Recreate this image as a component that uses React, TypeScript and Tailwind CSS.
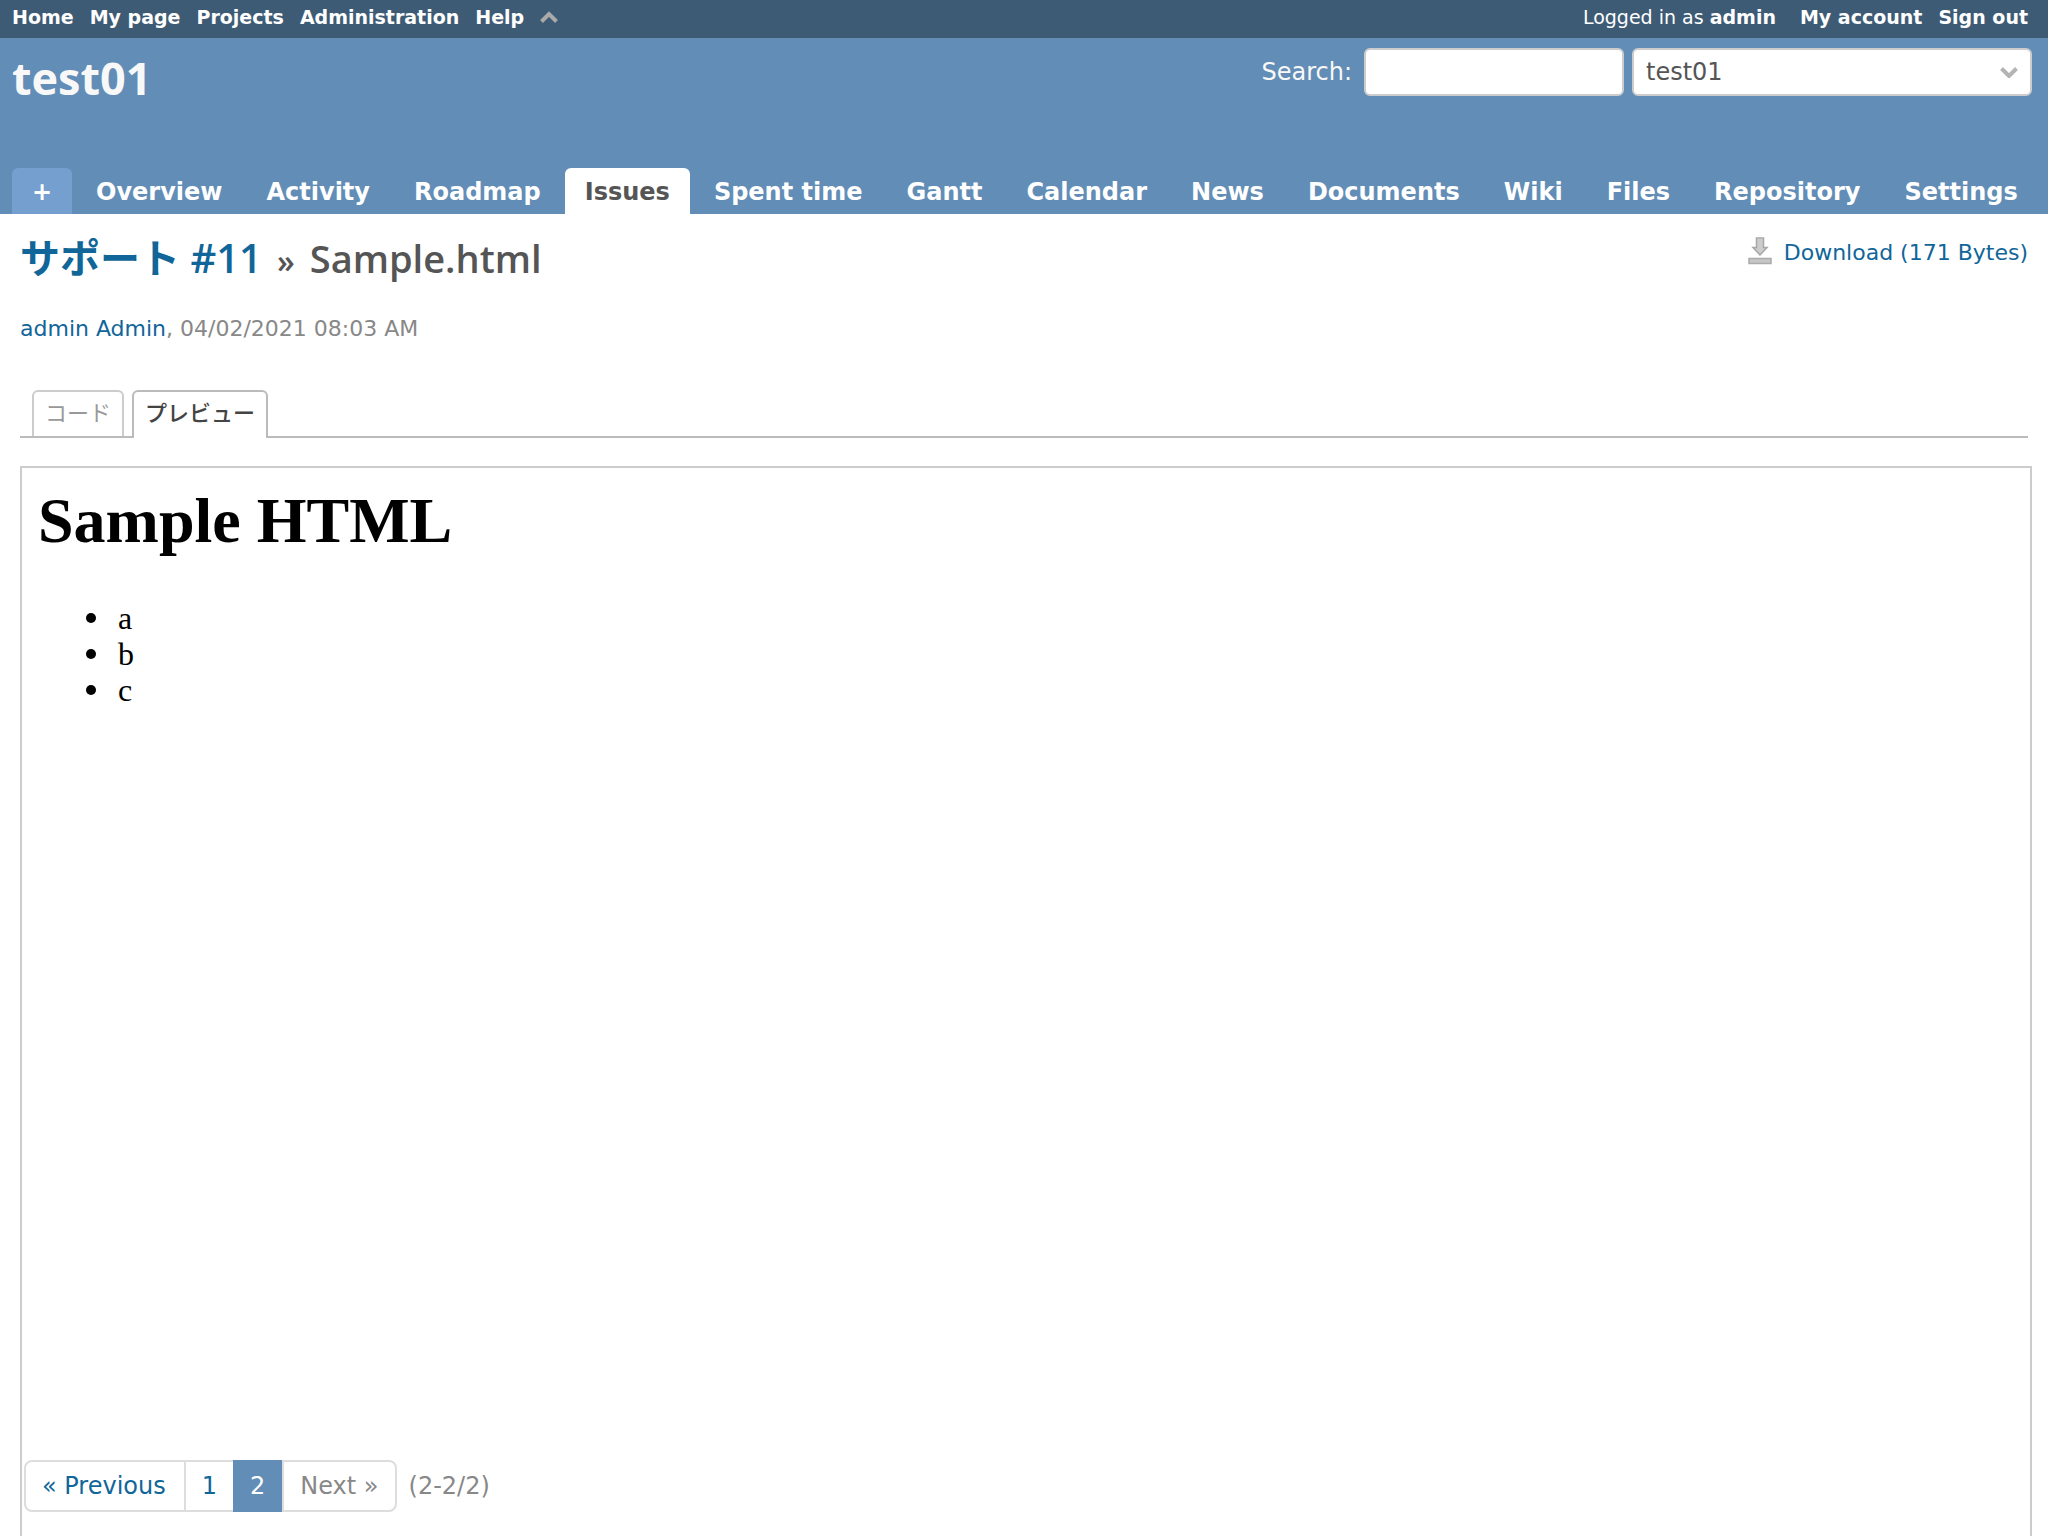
const navItems = [
  'Overview',
  'Activity',
  'Roadmap',
  'Issues',
  'Spent time',
  'Gantt',
  'Calendar',
  'News',
  'Documents',
  'Wiki',
  'Files',
  'Repository',
  'Settings',
];

const topLinks = ['Home', 'My page', 'Projects', 'Administration', 'Help'];

function TopMenu() {
  return (
    <div className="flex h-[38px] items-center justify-between bg-[#3e5b76] px-3 pb-1 text-[19px] leading-6 text-white">
      <nav aria-label="Global" className="flex items-center gap-4 font-bold">
        {topLinks.map((label) => (
          <a key={label} href="#">
            {label}
          </a>
        ))}
        <button type="button" aria-label="Collapse menu">
          <svg width="18" height="12" viewBox="0 0 18 12" className="block">
            <path d="M1.5 10.5 9 3l7.500 7.500" fill="none" stroke="#aaaaaa" strokeWidth="4" />
          </svg>
        </button>
      </nav>
      <div className="flex gap-4 pr-2 font-bold">
        <div className="mr-2 font-normal">
          Logged in as{' '}
          <a href="#" className="font-bold">
            admin
          </a>
        </div>
        <a href="#">My account</a>
        <a href="#">Sign out</a>
      </div>
    </div>
  );
}

function Header() {
  return (
    <header className="bg-[#628db6] text-[#f8f8f8]">
      <div className="flex h-[130px] items-start justify-between pr-4 pl-3">
        <h1 className="pt-[10px] font-['Open_Sans'] text-[45px] leading-[60px] font-bold">test01</h1>
        <form className="flex items-center gap-2 pt-[10px] text-[24px]" onSubmit={(e) => e.preventDefault()}>
          <label htmlFor="q" className="pr-1">
            <a href="#">Search</a>:
          </label>
          <input
            id="q"
            type="text"
            className="h-12 w-[260px] rounded-md border-2 border-[#cccccc] bg-white px-3 text-[#555555]"
          />
          <div className="grid">
            <select
              aria-label="Project"
              className="col-start-1 row-start-1 h-12 w-[400px] appearance-none rounded-md border-2 border-[#cccccc] bg-white px-3 text-[#555555]"
            >
              <option>test01</option>
            </select>
            <svg
              width="18"
              height="12"
              viewBox="0 0 18 12"
              className="pointer-events-none col-start-1 row-start-1 mr-[14px] self-center justify-self-end"
            >
              <path d="M1.500 2.500 9 10l7.500-7.500" fill="none" stroke="#b4b4b4" strokeWidth="4" />
            </svg>
          </div>
        </form>
      </div>
      <nav aria-label="Project" className="flex gap-1 pl-3 text-[24px] leading-[44px] font-bold text-white">
        <button type="button" aria-label="New" className="w-[60px] rounded-t-md bg-[#759fcf] pt-[2px] font-bold">
          +
        </button>
        {navItems.map((label) => (
          <a
            key={label}
            href="#"
            className={
              label === 'Issues'
                ? 'rounded-t-md bg-white px-5 pt-[2px] whitespace-nowrap text-[#555555]'
                : 'px-5 pt-[2px] whitespace-nowrap'
            }
          >
            {label}
          </a>
        ))}
      </nav>
    </header>
  );
}

function DownloadIcon() {
  return (
    <svg width="24" height="28" viewBox="0 0 24 28" aria-hidden="true" className="self-start">
      <path d="M8.500 1.500h7V10h4.500L12 18.500 4 10h4.500z" fill="#cccccc" />
      <path d="M8.500 1v9.500H5L12 18l7-7.500h-3.500V1z" fill="none" stroke="#a8a8a8" strokeWidth="1.500" />
      <rect x="1" y="21.500" width="22" height="5" fill="#c6c6c6" stroke="#ababab" strokeWidth="1.500" />
    </svg>
  );
}

function Pagination() {
  return (
    <nav aria-label="Pagination" className="mt-auto mb-6 ml-[2px] flex items-center gap-3 text-[24px] text-[#888888]">
      <ul className="flex leading-[48px]">
        <li className="rounded-l-lg border-2 border-[#dddddd] pr-[18px] pl-4 text-[#169]">
          <a href="#">« Previous</a>
        </li>
        <li className="border-y-2 border-[#dddddd] px-4 text-[#169]">
          <a href="#">1</a>
        </li>
        <li aria-current="page" className="border-y-2 border-[#628db6] bg-[#628db6] px-[17px] text-white">
          2
        </li>
        <li className="rounded-r-lg border-2 border-[#dddddd] px-4">Next »</li>
      </ul>
      <span>(2-2/2)</span>
    </nav>
  );
}

export default function App() {
  return (
    <div className="flex min-h-screen flex-col bg-white font-['DejaVu_Sans','Noto_Sans_CJK_JP',sans-serif]">
      <TopMenu />
      <Header />
      <main className="flex flex-1 flex-col pr-4 pl-5">
        <div className="flex items-start justify-between pt-4 pr-1">
          <h2 className="flex items-baseline gap-[15px] font-['Open_Sans','Noto_Sans_CJK_JP',sans-serif] text-[38px] leading-[56px] font-semibold text-[#555555]">
            <a href="#" className="text-[40px] text-[#169]">
              サポート #11
            </a>
            <span className="text-[32px]">»</span>
            <span>Sample.html</span>
          </h2>
          <a href="#" className="flex items-center gap-3 pt-[7px] text-[22px] leading-8 text-[#169]">
            <DownloadIcon />
            Download (171 Bytes)
          </a>
        </div>
        <p className="pt-6 text-[22px] leading-8 text-[#888888]">
          <a href="#" className="text-[#169]">
            admin Admin
          </a>
          , 04/02/2021 08:03 AM
        </p>
        <div className="mt-[45px] mr-1 flex gap-2 border-b-2 border-[#bbbbbb] pl-3 text-[22px] leading-[44px]">
          <a href="#" className="rounded-t-md border-2 border-b-0 border-[#cccccc] px-[11px] text-[#999999]">
            コード
          </a>
          <a
            href="#"
            aria-current="page"
            className="-mb-[2px] rounded-t-md border-2 border-b-0 border-[#bbbbbb] bg-white px-[11px] font-medium text-[#444444]"
          >
            プレビュー
          </a>
        </div>
        <section className="mt-7 flex flex-1 flex-col border-2 border-b-0 border-[#cccccc]">
          <article className="p-4 font-['Liberation_Serif',serif] text-black">
            <h1 className="text-[64px] leading-[74px] font-bold">Sample HTML</h1>
            <ul className="mt-[42px] pl-12 text-[32px] leading-9">
              {['a', 'b', 'c'].map((item) => (
                <li
                  key={item}
                  className="flex items-center before:mr-[22px] before:size-[10px] before:rounded-full before:bg-black"
                >
                  {item}
                </li>
              ))}
            </ul>
          </article>
          <Pagination />
        </section>
      </main>
    </div>
  );
}
